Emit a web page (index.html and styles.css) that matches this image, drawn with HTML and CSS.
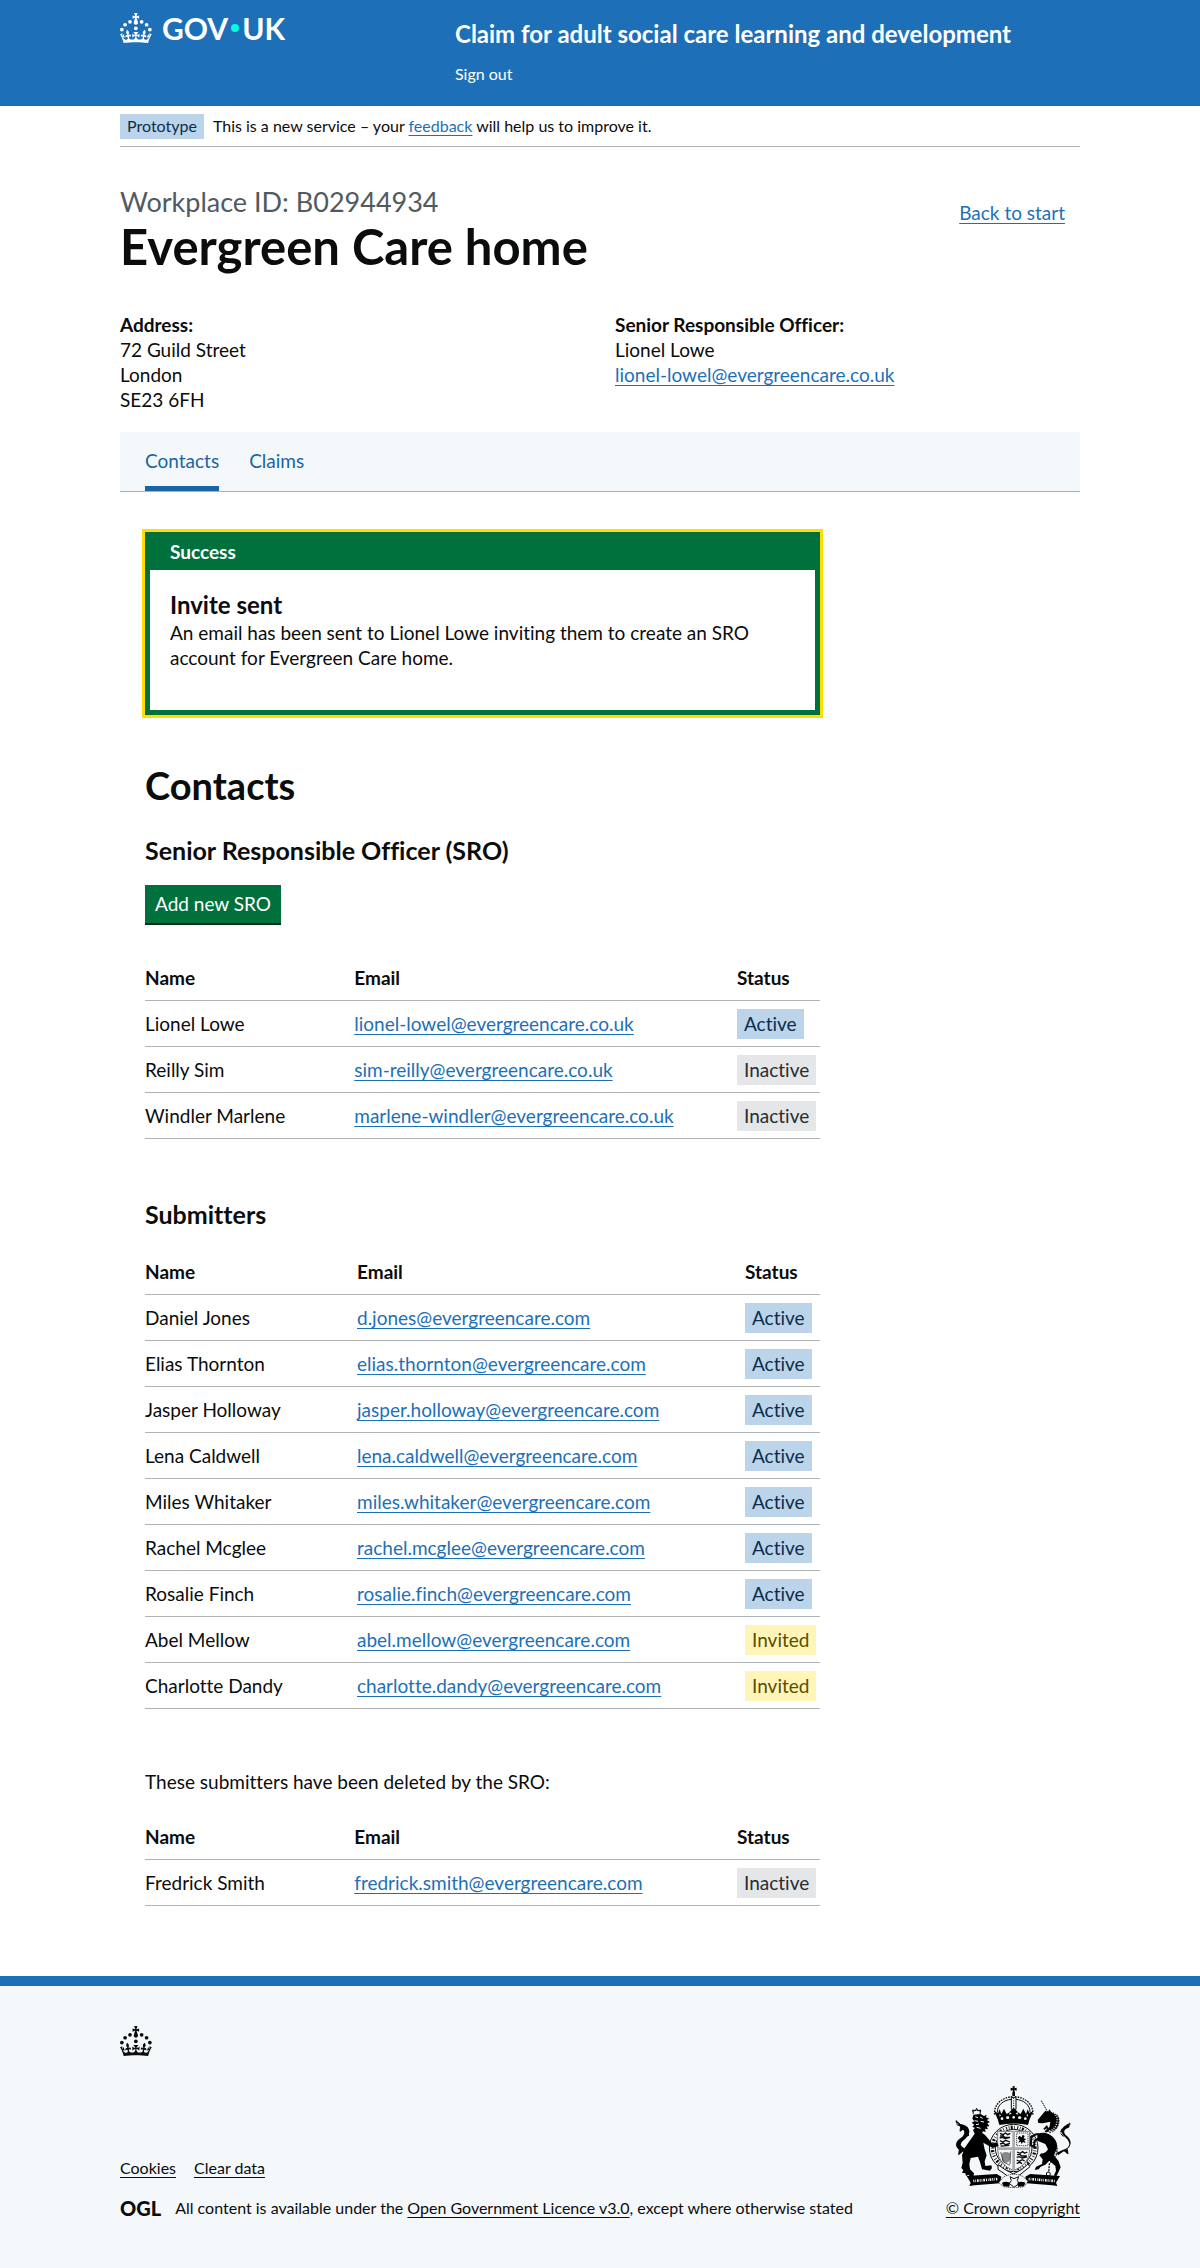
FILE: index.html
```html
<!DOCTYPE html>
<html lang="en">
<head>
<meta charset="utf-8">
<meta name="viewport" content="width=device-width, initial-scale=1">
<title>Evergreen Care home – Claim for adult social care learning and development</title>
<link rel="stylesheet" href="styles.css">
</head>
<body>
<svg class="sprite" width="0" height="0" aria-hidden="true">
  <symbol id="crown" viewBox="0 0 64 60">
    <circle cx="20" cy="17.6" r="3.7"/><circle cx="10.2" cy="23.5" r="3.7"/><circle cx="3.7" cy="33.2" r="3.7"/><circle cx="31.7" cy="30.6" r="3.7"/><circle cx="43.3" cy="17.6" r="3.7"/><circle cx="53.2" cy="23.5" r="3.7"/><circle cx="59.7" cy="33.2" r="3.7"/>
    <path d="M33.1,9.8c.2-.1.3-.3.5-.5l4.6,2.4v-6.8l-4.6,1.5c-.1-.2-.3-.3-.5-.5l1.9-5.9h-6.7l1.9,5.9c-.2.1-.3.3-.5.5l-4.6-1.5v6.8l4.6-2.4c.1.2.3.3.5.5l-2.6,8c-.9,2.8,1.2,5.7,4.1,5.7h0c3,0,5.1-2.9,4.1-5.7l-2.6-8ZM37,37.9s-3.4,3.8-4.1,6.1c2.2,0,4.2-.5,6.4-2.8l-.7,8.5c-2-2.8-4.4-4.1-5.7-3.8.1,3.1.5,6.7,5.8,7.2,3.7.3,6.7-1.5,7-3.8.4-2.6-2-4.3-3.7-1.6-1.4-4.5,2.4-6.1,4.9-3.2-1.9-4.5-1.8-7.7,2.4-10.9,3,4,2.6,7.3-1.2,11.1,2.4-1.3,6.2,0,4,4.6-1.2-2.8-3.7-2.2-4.2.2-.3,1.7.7,3.7,3,4.2,1.9.3,4.7-.9,7-5.9-1.3,0-2.4.7-3.9,1.7l2.4-8c.6,2.3,1.4,3.7,2.2,4.5.6-1.6.5-2.8,0-5.3l5,1.8c-2.6,3.6-5.2,8.7-7.3,17.5-7.4-1.1-15.7-1.7-24.5-1.7h0c-8.8,0-17.1.6-24.5,1.7-2.1-8.9-4.7-13.9-7.3-17.5l5-1.8c-.5,2.5-.6,3.7,0,5.3.8-.8,1.6-2.3,2.2-4.5l2.4,8c-1.5-1-2.6-1.7-3.9-1.7,2.3,5,5.2,6.2,7,5.9,2.3-.4,3.3-2.4,3-4.2-.5-2.4-3-3.1-4.2-.2-2.2-4.6,1.6-6,4-4.6-3.7-3.7-4.2-7.1-1.2-11.1,4.2,3.2,4.3,6.4,2.4,10.9,2.5-2.8,6.3-1.3,4.9,3.2-1.8-2.7-4.1-1-3.7,1.6.3,2.3,3.3,4.1,7,3.8,5.4-.5,5.7-4.2,5.8-7.2-1.3-.2-3.7,1-5.7,3.8l-.7-8.5c2.2,2.3,4.2,2.7,6.4,2.8-.7-2.3-4.1-6.1-4.1-6.1h10.6Z"/>
  </symbol>
</svg>

<header class="header">
  <div class="container header-row">
    <a class="logo" href="#" aria-label="GOV.UK">
      <svg class="crown" aria-hidden="true"><use href="#crown"/></svg>
      <span class="wordmark"><span>GOV</span><i class="dot"></i><span>UK</span></span>
    </a>
    <div class="header-content">
      <a class="service-name" href="#">Claim for adult social care learning and development</a>
      <a class="sign-out" href="#">Sign out</a>
    </div>
  </div>
</header>

<div class="container">
  <div class="phase">
    <strong class="tag tag-small">Prototype</strong>
    <span>This is a new service – your <a class="link" href="#">feedback</a> will help us to improve it.</span>
  </div>

  <main>
    <div class="title-row">
      <div>
        <p class="caption">Workplace ID: B02944934</p>
        <h1 class="title">Evergreen Care home</h1>
      </div>
      <a class="link back" href="#">Back to start</a>
    </div>

    <div class="details">
      <div>
        <strong>Address:</strong><br>72 Guild Street<br>London<br>SE23 6FH
      </div>
      <div>
        <strong>Senior Responsible Officer:</strong><br>Lionel Lowe<br><a class="link" href="#">lionel-lowel@evergreencare.co.uk</a>
      </div>
    </div>

    <nav class="tabs" aria-label="Workplace">
      <a class="tab tab-active" href="#" aria-current="page">Contacts</a>
      <a class="tab" href="#">Claims</a>
    </nav>

    <div class="content">
      <section class="notice" role="alert">
        <h2 class="notice-title">Success</h2>
        <div class="notice-body">
          <h3 class="heading-m">Invite sent</h3>
          <p>An email has been sent to Lionel Lowe inviting them to create an SRO account for Evergreen Care home.</p>
        </div>
      </section>

      <h2 class="heading-l">Contacts</h2>
      <h3 class="heading-m">Senior Responsible Officer (SRO)</h3>
      <button class="button" type="button">Add new SRO</button>

      <table class="table">
        <thead><tr><th class="col-name">Name</th><th>Email</th><th class="col-status">Status</th></tr></thead>
        <tbody>
          <tr><td>Lionel Lowe</td><td><a class="link" href="#">lionel-lowel@evergreencare.co.uk</a></td><td><strong class="tag">Active</strong></td></tr>
          <tr><td>Reilly Sim</td><td><a class="link" href="#">sim-reilly@evergreencare.co.uk</a></td><td><strong class="tag tag-grey">Inactive</strong></td></tr>
          <tr><td>Windler Marlene</td><td><a class="link" href="#">marlene-windler@evergreencare.co.uk</a></td><td><strong class="tag tag-grey">Inactive</strong></td></tr>
        </tbody>
      </table>

      <h3 class="heading-m">Submitters</h3>
      <table class="table table-submitters">
        <thead><tr><th class="col-name">Name</th><th>Email</th><th class="col-status">Status</th></tr></thead>
        <tbody>
          <tr><td>Daniel Jones</td><td><a class="link" href="#">d.jones@evergreencare.com</a></td><td><strong class="tag">Active</strong></td></tr>
          <tr><td>Elias Thornton</td><td><a class="link" href="#">elias.thornton@evergreencare.com</a></td><td><strong class="tag">Active</strong></td></tr>
          <tr><td>Jasper Holloway</td><td><a class="link" href="#">jasper.holloway@evergreencare.com</a></td><td><strong class="tag">Active</strong></td></tr>
          <tr><td>Lena Caldwell</td><td><a class="link" href="#">lena.caldwell@evergreencare.com</a></td><td><strong class="tag">Active</strong></td></tr>
          <tr><td>Miles Whitaker</td><td><a class="link" href="#">miles.whitaker@evergreencare.com</a></td><td><strong class="tag">Active</strong></td></tr>
          <tr><td>Rachel Mcglee</td><td><a class="link" href="#">rachel.mcglee@evergreencare.com</a></td><td><strong class="tag">Active</strong></td></tr>
          <tr><td>Rosalie Finch</td><td><a class="link" href="#">rosalie.finch@evergreencare.com</a></td><td><strong class="tag">Active</strong></td></tr>
          <tr><td>Abel Mellow</td><td><a class="link" href="#">abel.mellow@evergreencare.com</a></td><td><strong class="tag tag-yellow">Invited</strong></td></tr>
          <tr><td>Charlotte Dandy</td><td><a class="link" href="#">charlotte.dandy@evergreencare.com</a></td><td><strong class="tag tag-yellow">Invited</strong></td></tr>
        </tbody>
      </table>

      <p>These submitters have been deleted by the SRO:</p>
      <table class="table">
        <thead><tr><th class="col-name">Name</th><th>Email</th><th class="col-status">Status</th></tr></thead>
        <tbody>
          <tr><td>Fredrick Smith</td><td><a class="link" href="#">fredrick.smith@evergreencare.com</a></td><td><strong class="tag tag-grey">Inactive</strong></td></tr>
        </tbody>
      </table>
    </div>
  </main>
</div>

<footer class="footer">
  <div class="container">
    <svg class="crown" aria-hidden="true"><use href="#crown"/></svg>
    <div class="footer-row">
      <div>
        <nav class="footer-links" aria-label="Support links">
          <a href="#">Cookies</a>
          <a href="#">Clear data</a>
        </nav>
        <div class="licence">
          <span class="ogl">OGL</span>
          <span>All content is available under the <a href="#">Open Government Licence v3.0</a>, except where otherwise stated</span>
        </div>
      </div>
      <a class="copyright" href="#">
        <svg class="crest" viewBox="51 32 348 306" aria-hidden="true">
          <!-- crown -->
          <path d="M223 33h8l-2 6 7-2v9l-7-2 2 8v10h-8V52l2-8-7 2v-9l7 2z"/>
          <path d="M170 118c-4-30 22-52 53-54M284 118c4-30-22-52-53-54" fill="none" stroke="#0b0c0c" stroke-width="4" stroke-dasharray="5 3"/>
          <path d="M178 112c-1-24 20-38 42-40M276 112c1-24-20-38-42-40" fill="none" stroke="#0b0c0c" stroke-width="3"/>
          <path d="M220 66h14v36h-14z" fill="none" stroke="#0b0c0c" stroke-width="3"/>
          <path d="M227 68v34" stroke="#0b0c0c" stroke-width="3" stroke-dasharray="3 4"/>
          <path d="M168 106l12 8 5-12 5 14 8-16 8 16 6-4 15-14 15 14 6 4 8-16 8 16 5-14 5 12 12-8-12 28-3 12q-44-10-88 0l-3-12z"/>
          <g fill="#f4f8fb"><circle cx="192" cy="130" r="4"/><ellipse cx="209" cy="127" rx="5" ry="4"/><circle cx="227" cy="126" r="4"/><ellipse cx="245" cy="127" rx="5" ry="4"/><circle cx="262" cy="130" r="4"/><path d="M184 116l5 4-4 4zM270 116l-5 4 4 4zM215 110l6 5-7 3zM239 110l-6 5 7 3z"/></g>
          <path d="M184 140q43-9 86 0v9q-43-9-86 0z"/>
          <!-- garter -->
          <ellipse cx="227" cy="218" rx="73" ry="71" fill="#f4f8fb" stroke="#0b0c0c" stroke-width="3"/>
          <ellipse cx="227" cy="218" rx="64" ry="62" fill="none" stroke="#0b0c0c" stroke-width="10" stroke-dasharray="3 5 2 4 6 5 2 7"/>
          <ellipse cx="227" cy="218" rx="55" ry="56" fill="#f4f8fb" stroke="#0b0c0c" stroke-width="3"/>
          <!-- shield -->
          <path d="M179 168h96v54q0 44-48 64-48-20-48-64z" fill="#f4f8fb" stroke="#777b7d" stroke-width="3"/>
          <path d="M223 168h8v118h-8zM179 216h96v8h-96z" fill="#a7abad"/>
          <path d="M186 174l9 4 8-5 6 5 8-4M186 182h10l4 4h16M185 188l8-2 8 4 14-3M186 196l8 4 9-5 13 5M186 206l10-3 6 5 14-4M188 212l26-2M237 230l9 4 8-5 6 5 8-4M237 238h10l4 4h16M236 246l8-2 8 4 14-3M236 254l8 4 9-5 7 4M236 264l10-3 6 4" fill="none" stroke="#0b0c0c" stroke-width="4"/>
          <path d="M236 173h34v38h-34z" fill="none" stroke="#0b0c0c" stroke-width="2" stroke-dasharray="4 2"/>
          <path d="M244 181l7 5 3-8 6 4-3 7 8 2-6 4 4 8-8-3-4 6-3-7-7 3 4-8-6-5z"/>
          <path d="M192 234q12-8 24 0v16q0 10-12 12-12-2-12-12z" fill="#868a8c"/>
          <path d="M188 230l8 30 20 10M218 228l-2 38" fill="none" stroke="#0b0c0c" stroke-width="2"/>
          <path d="M180 268l20 14 26 14 26-14 18-16 6 8-30 24-20 10-20-8-26-18z" fill="#f4f8fb" stroke="#0b0c0c" stroke-width="3"/>
          <!-- lion -->
          <path d="M106 116l-2-12 8 2 4-7 4 7 8-2-2 12M104 108q12-8 24 0" fill="none" stroke="#0b0c0c" stroke-width="3"/>
          <path d="M106 118l22-2 10 6 8-4-2 8 10 4-8 4 10 6-8 4 6 8-8 2 4 8-9-2 2 10-8-2-6 10-20-4-4-10 6-6-8-4 6-6-8-6 8-4-6-8z"/>
          <path d="M112 124l8 3M126 125l8 4M110 136l10 2M128 138l10 2M114 148l9-2M116 156l12 3" stroke="#f4f8fb" stroke-width="3"/>
          <path d="M112 172q16-6 30 8l20 24 16-2 4 10-18 6-28-16 4 20 6 18-6 18 2 14 18-2 2 8-6 8-24-4-6-22-6-16-22 4-4 18 2 16 12 12-2 12-8 2-6-10-8 4-2-8-10-2 4-8-6-6 4-16-2-22 8-22z"/>
          <path d="M96 242l-18-12q-22-6-24-20 0-14 14-22 14-10 10-22-8-4-10-12l-14-6q14-4 22 0 16 4 18 20 0 12-12 22-12 8-14 18 4 10 22 14l14 12z"/>
          <path d="M56 144l-2-8 14 12M68 152l-2 16 12-8M64 222l-2 16 12-10M84 184l6-12 2 10" stroke="#0b0c0c" stroke-width="3"/>
          <!-- unicorn -->
          <path d="M310 76l20 36" stroke="#0b0c0c" stroke-width="3" stroke-dasharray="5 2"/>
          <path d="M322 106l8 4 4-8 5 7q22 4 24 28-2 24-22 30l-18 4 12-18 2-14-22 5-14-1-2-9 10-12z"/>
          <path d="M342 110q20 10 14 34-4 18-22 22" fill="none" stroke="#f4f8fb" stroke-width="4" stroke-dasharray="3 4"/>
          <path d="M358 118q10 18 0 38-8 14-24 16" fill="none" stroke="#0b0c0c" stroke-width="3" stroke-dasharray="5 3"/>
          <path d="M318 162l8-8 4 8-8 8M302 176q-14 0-22 12l-2 22 10 4 2-18 14-8" fill="none" stroke="#0b0c0c" stroke-width="6"/>
          <path d="M298 176q24-10 46 8 18 18 12 38l-8 18 14 18 6 18-8 18-6 10-6-4 6-14-2-14-18-16-12 12-14 6-6 8-12 2 4-10 18-8 2-14-10-12 6-6q12 2 20-12l-8-16-24-10z"/>
          <path d="M350 200q12 16 4 40l-20 26-2 26" fill="none" stroke="#0b0c0c" stroke-width="4" stroke-dasharray="6 3"/>
          <circle cx="331" cy="296" r="6" fill="none" stroke="#0b0c0c" stroke-width="3"/>
          <path d="M356 232l18-8q22-6 20-20-2-10-12-18-14-10-10-24 4-12 18-14l6-8-2 16-12 6q-8 8 2 18 14 10 14 24-2 16-24 26l-14 10z"/>
          <path d="M372 160l-4 10 10-2M386 148l12-2M388 222l2 14-12-10M376 184l-8-10" stroke="#0b0c0c" stroke-width="3"/>
          <!-- motto scroll -->
          <path d="M86 302l90-6 14 8-4 20-76 6-16 2 4-10z"/>
          <path d="M366 302l-90-6-14 8 4 20 76 6 16 2-4-10z"/>
          <g fill="none" stroke="#f4f8fb" stroke-width="8" stroke-dasharray="3 3 2 3 5 3"><path d="M106 317l72-6"/><path d="M272 311l78 6"/></g>
          <path d="M198 304q30-14 58 0l14 14-12 16-30 4-32-4-14-12z" fill="#f4f8fb" stroke="#0b0c0c" stroke-width="2" stroke-dasharray="4 2"/>
          <path d="M192 322q12-6 24 0l-2 12-18-1zM262 322q-12-6-24 0l2 12 18-1z"/>
          <path d="M216 304l12 6 14-6-4 12 6 8-16 12-14-12 6-8z" fill="none" stroke="#0b0c0c" stroke-width="3"/>
        </svg>
        <span>© Crown copyright</span>
      </a>
    </div>
  </div>
</footer>
</body>
</html>
```
FILE: styles.css
```css
* { box-sizing: border-box; }

body {
  margin: 0;
  background: #fff;
  color: #0b0c0c;
  font: 19px/25px Lato, "Liberation Sans", sans-serif;
  font-variant-ligatures: none;
}

h1, h2, h3, p { margin: 0; }

.sprite { display: block; }

.container {
  max-width: 960px;
  margin: 0 auto;
}

.link {
  color: #1d70b8;
  text-decoration: underline;
  text-decoration-thickness: 1px;
  text-underline-offset: 3px;
}

/* Header */
.header {
  background: #1d70b8;
  padding: 13px 0 21px;
}

.header-row { display: flex; }

.header a {
  color: #fff;
  text-decoration: none;
}

.logo {
  display: flex;
  flex: 0 0 335px;
  gap: 10px;
  height: 30px;
}

.crown {
  display: block;
  width: 32px;
  height: 30px;
  fill: currentColor;
}

.wordmark {
  display: flex;
  align-items: center;
  gap: 3px;
  font-size: 30px;
  font-weight: 700;
  line-height: 36px;
}

.dot {
  width: 8px;
  height: 8px;
  border-radius: 50%;
  background: #00ffe0;
}

.header-content {
  display: flex;
  flex-direction: column;
  align-items: flex-start;
  gap: 15px;
  padding-top: 6px;
}

.service-name {
  font-size: 24px;
  font-weight: 700;
  line-height: 30px;
}

.sign-out {
  padding-bottom: 1px;
  font-size: 16px;
  line-height: 20px;
}

/* Phase banner */
.phase {
  display: flex;
  align-items: flex-start;
  gap: 9px;
  padding: 8px 0 7px;
  border-bottom: 1px solid #b1b4b6;
  font-size: 16px;
  line-height: 23px;
}

.tag {
  display: inline-block;
  margin: -2px 0 -3px;
  padding: 2px 7px 3px;
  background: #bbd4ea;
  color: #0c2d4a;
  font-weight: 400;
  white-space: nowrap;
}

.tag-small {
  margin: 0;
  padding: 0 7px 2px;
}

.tag-grey {
  background: #e5e6e7;
  color: #282d30;
}

.tag-yellow {
  background: #fff5b8;
  color: #594d00;
}

/* Workplace heading */
.title-row {
  display: flex;
  justify-content: space-between;
  align-items: flex-start;
  padding-top: 40px;
}

.caption {
  color: #505a5f;
  font-size: 27px;
  line-height: 30px;
}

.title {
  font-size: 49px;
  font-weight: 700;
  line-height: 58px;
}

.back { margin: 13px 15px 0 0; }

.details {
  display: grid;
  grid-template-columns: 1fr 1fr;
  gap: 30px;
  margin: 37px 0 20px;
}

.tabs {
  display: flex;
  gap: 30px;
  padding: 0 25px;
  border-bottom: 1px solid #8eb8dc;
  background: #f4f8fb;
}

.tab {
  padding: 16px 0 18px;
  color: #1a65a6;
  text-decoration: none;
}

.tab-active {
  padding-bottom: 13px;
  border-bottom: 5px solid #1a65a6;
}

/* Tab content */
.content {
  max-width: 725px;
  padding: 40px 25px 70px;
}

.notice {
  margin-bottom: 50px;
  border: 5px solid #00703c;
  outline: 3px solid #ffdd00;
}

.notice-title {
  padding: 2px 20px 6px;
  background: #00703c;
  color: #fff;
  font-size: 19px;
  line-height: 25px;
}

.notice-body { padding: 20px 20px 40px; }

.heading-l {
  margin-bottom: 30px;
  font-size: 38px;
  line-height: 40px;
}

.heading-m {
  font-size: 25px;
  line-height: 30px;
}

.notice .heading-m { font-size: 24px; }

.button {
  display: block;
  margin: 20px 0 32px;
  padding: 6px 10px 7px;
  border: 0;
  background: #00703c;
  box-shadow: 0 2px 0 #002d18;
  color: #fff;
  font: inherit;
}

.table {
  width: 100%;
  margin-bottom: 60px;
  border-collapse: separate;
  border-spacing: 0;
  table-layout: fixed;
}

.heading-m + .table, p + .table { margin-top: 20px; }
.table:last-child { margin-bottom: 0; }

.table th, .table td {
  padding: 10px 0;
  border-bottom: 1px solid #b1b4b6;
  text-align: left;
  vertical-align: top;
}

.col-name { width: 31%; }
.col-status { width: 83px; }
.table-submitters .col-name { width: 212px; }
.table-submitters .col-status { width: 75px; }

/* Footer */
.footer {
  padding: 40px 0 50px;
  border-top: 10px solid #1d70b8;
  background: #f4f8fb;
  font-size: 16px;
  line-height: 20px;
}

.footer a {
  color: #0b0c0c;
  text-decoration: underline;
  text-underline-offset: 3px;
}

.footer-row {
  display: flex;
  justify-content: space-between;
  align-items: flex-end;
  margin-top: 30px;
}

.footer-links {
  display: flex;
  gap: 18px;
  margin-bottom: 20px;
}

.licence {
  display: flex;
  gap: 14px;
}

.ogl {
  font-size: 20px;
  font-weight: 900;
}

.copyright {
  display: flex;
  flex-direction: column;
  align-items: center;
  gap: 10px;
}

.crest {
  width: 116px;
  height: 102px;
}
```
